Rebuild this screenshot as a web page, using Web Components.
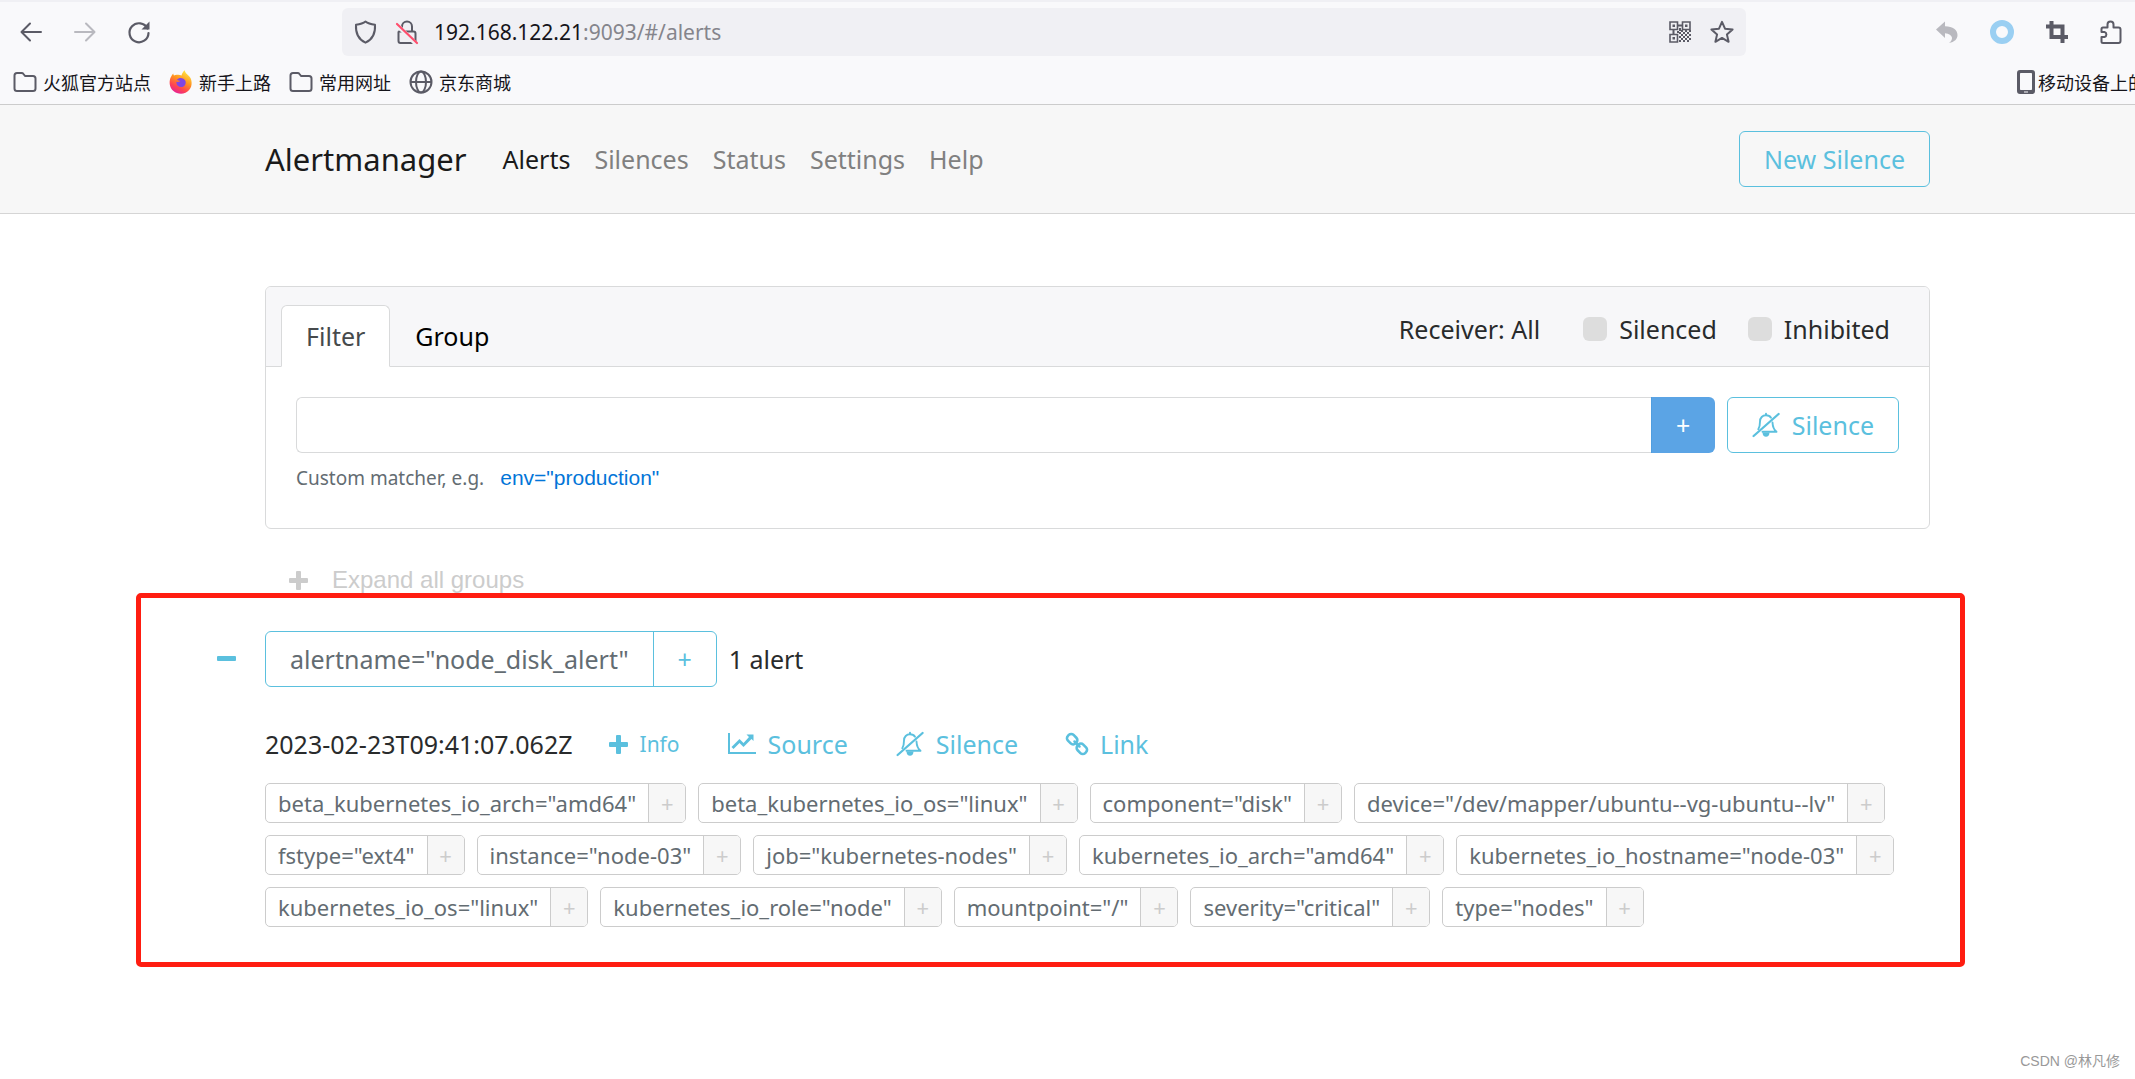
<!DOCTYPE html>
<html lang="zh-CN">
<head>
<meta charset="utf-8">
<meta name="viewport" content="width=device-width, initial-scale=1">
<title>Alertmanager</title>
<style>
  :root {
    --info: #5bc0de;
    --ink: #292b2c;
    --muted: #636c72;
    --line: #d9dadb;
    --fs-brand: 31px;
    --fs-base: 25px;
    --fs-chip: 22px;
    --fs-info: 21px;
    --fs-small: 19px;
  }
  html, body { margin: 0; background: #fff; }
  body {
    min-height: 100vh;
    overflow: hidden;
    position: relative;
    font-family: "Noto Sans", "Open Sans", "Noto Sans CJK SC", sans-serif;
    font-size: var(--fs-base);
    line-height: 28px;
    color: var(--ink);
  }
  main { padding: 72px 205px 0 265px; }
</style>
</head>
<body>
<browser-chrome></browser-chrome>
<am-navbar>
  <am-nav-link active>Alerts</am-nav-link>
  <am-nav-link>Silences</am-nav-link>
  <am-nav-link>Status</am-nav-link>
  <am-nav-link>Settings</am-nav-link>
  <am-nav-link>Help</am-nav-link>
</am-navbar>
<main>
  <am-filter-card></am-filter-card>
  <am-expand-all>Expand all groups</am-expand-all>
  <am-alert-group matcher='alertname="node_disk_alert"' count="1 alert">
    <am-alert time="2023-02-23T09:41:07.062Z">
      <am-label>beta_kubernetes_io_arch="amd64"</am-label>
      <am-label>beta_kubernetes_io_os="linux"</am-label>
      <am-label>component="disk"</am-label>
      <am-label>device="/dev/mapper/ubuntu--vg-ubuntu--lv"</am-label>
      <am-label>fstype="ext4"</am-label>
      <am-label>instance="node-03"</am-label>
      <am-label>job="kubernetes-nodes"</am-label>
      <am-label>kubernetes_io_arch="amd64"</am-label>
      <am-label>kubernetes_io_hostname="node-03"</am-label>
      <am-label>kubernetes_io_os="linux"</am-label>
      <am-label>kubernetes_io_role="node"</am-label>
      <am-label>mountpoint="/"</am-label>
      <am-label>severity="critical"</am-label>
      <am-label>type="nodes"</am-label>
    </am-alert>
  </am-alert-group>
</main>
<page-credit>CSDN @林凡修</page-credit>

<script>
const RESET = `
  :host, *, *::before, *::after { box-sizing: border-box; }
  button, input { font: inherit; margin: 0; }
  button { cursor: pointer; }
  a { text-decoration: none; color: inherit; }
`;

function define(name, markup, setup) {
  const template = document.createElement('template');
  customElements.define(name, class extends HTMLElement {
    connectedCallback() {
      if (this.shadowRoot) return;
      const root = this.attachShadow({ mode: 'open' });
      template.innerHTML = `<style>${RESET}</style>` + (typeof markup === 'function' ? markup(this) : markup);
      root.append(template.content.cloneNode(true));
      if (setup) setup(this, root);
    }
  });
}

/* Icons: each entry is [viewBox, body, width, height]. */
const LINE = 'fill="none" stroke="currentColor" stroke-linecap="round" stroke-linejoin="round"';
const ICONS = {
  back: ['0 0 24 24', `<path ${LINE} stroke-width="2" d="M22 12H3M11 3.500L2.500 12L11 20.500"/>`, 24, 24],
  forward: ['0 0 24 24', `<path ${LINE} stroke-width="2" d="M2 12H21M13 3.500L21.500 12L13 20.500"/>`, 24, 24],
  reload: ['0 0 24 24', `<path ${LINE} stroke-width="2.200" d="M20.500 8.500A9.500 9.500 0 1 0 21.500 13"/><path fill="currentColor" d="M22.500 1.500V9.500H14.500Z"/>`, 24, 24],
  shield: ['0 0 24 24', `<path ${LINE} stroke-width="2" d="M11.500 1.500C14 3.500 17.500 4.300 21 4.800C21.500 12.500 18.500 19.500 11.500 22.700C4.500 19.500 1.500 12.500 2 4.800C5.500 4.300 9 3.500 11.500 1.500Z"/>`, 24, 24],
  lockoff: ['0 0 24 24', `<path ${LINE} stroke-width="2" d="M8 11V6.500A5 5 0 0 1 18 6.500V11M5 11.500H19.500Q21.500 11.500 21.500 13.500V21Q21.500 23 19.500 23H6.500Q4.500 23 4.500 21V12"/><path stroke="#f0f0f4" stroke-width="4.500" d="M2.500 4.500L22 24"/><path stroke="#ff4f6e" stroke-width="2.200" stroke-linecap="round" d="M3 4L23 23"/>`, 24, 24],
  qr: ['0 0 22 22', `<g fill="none" stroke="currentColor" stroke-width="1.600"><path d="M1 1H8.500V8.500H1ZM13.500 1H21V8.500H13.500ZM1 13.500H8.500V21H1Z"/></g><path fill="currentColor" d="M3.500 3.500h2.500v2.500h-2.500zM16 3.500h2.500v2.500h-2.500zM3.500 16h2.500v2.500h-2.500zM9 3.500h4v2h-4zM3.500 9h2v4h-2zM10 7h2v3h-2zM8 10h2v2h-2zM12 9h2v2h-2zM16 9h2v2h-2zM20 9h2v2h-2zM10 11h2v2h-2zM14 11h2v2h-2zM18 11h2v2h-2zM12 13h2v2h-2zM16 13h2v2h-2zM20 13h2v2h-2zM10 15h2v2h-2zM14 15h2v2h-2zM18 15h2v2h-2zM12 17h2v2h-2zM16 17h2v2h-2zM20 17h2v2h-2zM10 19h2v2h-2zM14 19h2v2h-2zM18 19h2v2h-2z"/>`, 22, 22],
  star: ['0 0 24 24', `<path ${LINE} stroke-width="2" d="M12 1.800L15 8.700L22.600 9.400L16.900 14.400L18.600 21.800L12 17.900L5.400 21.800L7.100 14.400L1.400 9.400L9 8.700Z"/>`, 24, 24],
  undo: ['0 0 22 22', `<path fill="currentColor" d="M0 8.500L9 0.500V5.200C17 5.400 21.500 9 21.500 14C21.500 18 18.500 21 13 22C17.500 19 17.500 13 9 12.200V17Z"/>`, 22, 22],
  ring: ['0 0 24 24', `<circle cx="12" cy="12" r="9" fill="none" stroke="#9acff2" stroke-width="6"/>`, 24, 24],
  crop: ['0 0 22 22', `<path fill="none" stroke="currentColor" stroke-width="4" d="M5.500 0V16H22M0 5.500H16.500V22"/>`, 22, 22],
  puzzle: ['0 0 22 24', `<path ${LINE} stroke-width="2" d="M7.500 7.500V4.500A2.800 2.800 0 0 1 13.500 4.500V7.500H18.500Q20.500 7.500 20.500 9.500V21Q20.500 23 18.500 23H3Q1.500 23 1.500 21.500V17H4.500A2.600 2.600 0 0 0 4.500 12H1.500V9Q1.500 7.500 3 7.500Z"/>`, 22, 24],
  folder: ['0 0 24 22', `<path ${LINE} stroke-width="2" d="M4 2H8.500Q9.800 2 10.500 3L12 5H20Q22.500 5 22.500 7.500V17.500Q22.500 20 20 20H4Q1.500 20 1.500 17.500V4.500Q1.500 2 4 2Z"/>`, 24, 22],
  globe: ['0 0 24 24', `<g ${LINE} stroke-width="2"><circle cx="12" cy="12" r="10.500"/><ellipse cx="12" cy="12" rx="5" ry="10.500"/><path d="M2 12H22"/></g>`, 24, 24],
  firefox: ['0 0 24 24', `<defs><linearGradient id="f" x1=".8" y1="0" x2=".3" y2="1"><stop offset="0" stop-color="#fff24a"/><stop offset=".45" stop-color="#ff9320"/><stop offset=".75" stop-color="#ff4550"/><stop offset="1" stop-color="#e5209a"/></linearGradient></defs><path fill="url(#f)" d="M2.200 6.500C2.800 5 3.500 4 4.300 3.500C4.300 4.400 4.600 5 5 5.500C6 4.700 7.500 4.500 8.500 4.700C10 4.500 11.500 5 12.500 5.500C13 3.500 14 1.500 15.800 0.200C16 3.500 20 5 21.500 8C24 13.500 22.500 20 16.500 22.800C9.500 25.500 1.500 21.500 0.700 14C0.400 11 1 8.500 2.200 6.500Z"/><path fill="#8046e4" d="M8 9.500C10 7 15 7.500 16.500 11C17.500 15 14.500 17.500 11.500 17C8.500 16.500 7 14 7.500 11.500C8.500 12.500 10 11.800 11.500 11C10 10.800 9 10.500 8 9.500Z"/>`, 24, 24],
  phone: ['0 0 18 24', `<path fill="currentColor" fill-rule="evenodd" d="M3 0H15Q18 0 18 3V21Q18 24 15 24H3Q0 24 0 21V3Q0 0 3 0ZM3.800 3Q3 3 3 3.800V19.200Q3 20 3.800 20H14.200Q15 20 15 19.200V3.800Q15 3 14.200 3ZM7 21.500V22.500H11V21.500Z"/>`, 18, 24],
  plus: ['0 0 19 19', `<path fill="currentColor" d="M8 0H11Q12 0 12 1V7H18Q19 7 19 8V11Q19 12 18 12H12V18Q12 19 11 19H8Q7 19 7 18V12H1Q0 12 0 11V8Q0 7 1 7H7V1Q7 0 8 0Z"/>`, 19, 19],
  minus: ['0 0 19 19', `<rect fill="currentColor" y="6" width="19" height="5" rx="1"/>`, 19, 19],
  bell: ['0 0 28 26', `<g ${LINE}><path stroke-width="1.900" d="M6.300 17.300C7.600 15.300 8 13 8 9.500C8 5.800 10.500 3.300 14 3.300C16.200 3.300 18 4.200 19 5.700M20.500 10.500C20.700 15 22 17.800 24.500 19.800H10.500"/><path stroke-width="2" d="M14 1.700V3"/><path stroke-width="2.300" d="M1.600 24L26.600 2"/></g><path fill="currentColor" d="M10.500 20.500H17.500C17.500 23.300 16 24.800 14 24.800C12 24.800 10.500 23.300 10.500 20.500Z"/>`, 28, 26],
  chart: ['0 0 28 22', `<path fill="currentColor" d="M0 0H2V19H28V21H0ZM25.500 1.500V8L23.500 6L15.500 14L11.500 10L5.500 16L3.500 14L11.500 6L15.500 10L21 4L18.500 1.500Z"/>`, 28, 22],
  link: ['0 0 22 22', `<g transform="rotate(45 11 11)" fill="none" stroke="currentColor" stroke-width="2.600"><rect x="-1.200" y="7" width="10.700" height="8" rx="3.400"/><rect x="12.500" y="7" width="10.700" height="8" rx="3.400"/><path stroke-linecap="round" d="M7.500 11H14.500"/></g>`, 22, 22]
};

define('ui-icon', el => {
  const [box, body, w, h] = ICONS[el.getAttribute('name')];
  return `<style>:host{display:inline-flex;flex:none}svg{display:block;overflow:visible}</style>
    <svg viewBox="${box}" width="${w}" height="${h}" aria-hidden="true">${body}</svg>`;
});

define('browser-chrome', `
  <style>
    :host { display: block; background: #f9f9fb; border-top: 2px solid #f0f0f4; border-bottom: 1px solid #ccc; color: #5b5b66; }
    button { background: none; border: 0; padding: 0; color: inherit; display: flex; }
    .bar { display: flex; align-items: center; padding: 6px 13px 0 19px; height: 54px; }
    .nav { display: flex; gap: 30px; width: 323px; flex: none; align-items: center; }
    .nav .off { opacity: .4; }
    .url { flex: 0 1 1404px; height: 48px; border-radius: 6px; background: #f0f0f4; display: flex; align-items: center; padding: 0 12px; gap: 16px; }
    .addr { flex: 1; color: #85858c; font-size: 21px; white-space: nowrap; }
    .addr b { font-weight: 400; color: #15141a; }
    .in { display: flex; align-items: center; gap: 19px; }
    .tools { margin-left: auto; display: flex; align-items: center; gap: 32px; }
    .tools .off { color: #b9b9bf; }
    .marks { display: flex; align-items: center; height: 48px; padding: 4px 0 0 13px; gap: 18px; font-size: 18px; line-height: 24px; color: #15141a; overflow: hidden; }
    .marks a { display: flex; align-items: center; gap: 6px; white-space: nowrap; font-family: "Noto Sans CJK SC", sans-serif; }
    .marks ui-icon { color: #5b5b66; }
    .marks .mobile { margin: 0 -11px 0 auto; gap: 3px; }
  </style>
  <div class="bar">
    <div class="nav">
      <button aria-label="Back"><ui-icon name="back"></ui-icon></button>
      <button class="off" aria-label="Forward"><ui-icon name="forward"></ui-icon></button>
      <button aria-label="Reload"><ui-icon name="reload"></ui-icon></button>
    </div>
    <div class="url">
      <ui-icon name="shield"></ui-icon><ui-icon name="lockoff"></ui-icon>
      <span class="addr"><b>192.168.122.21</b>:9093/#/alerts</span>
      <div class="in"><ui-icon name="qr"></ui-icon><ui-icon name="star"></ui-icon></div>
    </div>
    <div class="tools">
      <ui-icon class="off" name="undo"></ui-icon>
      <ui-icon name="ring"></ui-icon>
      <ui-icon name="crop"></ui-icon>
      <ui-icon name="puzzle"></ui-icon>
    </div>
  </div>
  <nav class="marks">
    <a href="#"><ui-icon name="folder"></ui-icon>火狐官方站点</a>
    <a href="#"><ui-icon name="firefox"></ui-icon>新手上路</a>
    <a href="#"><ui-icon name="folder"></ui-icon>常用网址</a>
    <a href="#"><ui-icon name="globe"></ui-icon>京东商城</a>
    <a class="mobile" href="#"><ui-icon name="phone"></ui-icon>移动设备上的</a>
  </nav>`);

define('am-navbar', `
  <style>
    :host { display: flex; align-items: center; height: 109px; padding: 0 205px 0 265px; background: #f7f7f7; border-bottom: 1px solid #d5d5d5; }
    .brand { font-size: var(--fs-brand); line-height: 36px; color: #1a1a1a; margin-right: 36px; }
    nav { display: flex; gap: 24px; flex: 1; }
  </style>
  <a class="brand" href="#">Alertmanager</a>
  <nav><slot></slot></nav>
  <am-button>New Silence</am-button>`);

define('am-nav-link', `
  <style>
    :host { display: block; color: #808080; }
    :host([active]) { color: #1a1a1a; }
  </style>
  <a href="#"><slot></slot></a>`);

define('am-button', `
  <style>
    :host { display: block; flex: none; }
    button { display: flex; align-items: center; gap: 12px; height: 56px; padding: 0 24px; border: 1px solid var(--info); border-radius: 6px; background: none; color: var(--info); white-space: nowrap; }
    :host([plain]) button { border: 0; padding: 0; height: 42px; }
    :host([small]) { font-size: var(--fs-info); }
  </style>
  <button type="button"><slot></slot></button>`);

define('am-check', `
  <style>
    :host { display: block; }
    label { display: flex; align-items: center; gap: 12px; }
    input { appearance: none; width: 24px; height: 24px; border-radius: 6px; background: #ddd; }
  </style>
  <label><input type="checkbox"><slot></slot></label>`);

define('am-filter-card', `
  <style>
    :host { display: block; border: 1px solid var(--line); border-radius: 6px; }
    header { display: flex; align-items: flex-start; height: 80px; padding: 18px 39px 0 15px; background: #f7f7f9; border-bottom: 1px solid var(--line); border-radius: 5px 5px 0 0; }
    .tab { height: 62px; padding: 0 24px; border: 1px solid transparent; border-radius: 6px 6px 0 0; background: none; color: #000; }
    .tab.on { background: #fff; border-color: var(--line) var(--line) #fff; color: #464a4c; }
    .opts { margin-left: auto; display: flex; align-items: center; height: 48px; gap: 31px; }
    .recv { margin-right: 12px; border: 0; background: none; padding: 0; color: inherit; }
    .body { padding: 30px 30px 34px; }
    form { display: flex; gap: 12px; }
    .grp { display: flex; flex: 1; }
    .grp input { flex: 1; min-width: 0; height: 56px; padding: 0 18px; border: 1px solid var(--line); border-right: 0; border-radius: 6px 0 0 6px; outline: none; }
    .add { width: 64px; border: 0; border-left: 1px solid #4f9ee0; border-radius: 0 6px 6px 0; background: #5ba4e5; color: #fff; }
    .help { display: flex; align-items: center; gap: 16px; height: 32px; margin-top: 9px; font-size: var(--fs-small); color: var(--muted); }
    .help a { font: 21px/24px "Liberation Sans", sans-serif; color: #0275d8; }
  </style>
  <header>
    <button class="tab on" type="button">Filter</button>
    <button class="tab" type="button">Group</button>
    <div class="opts">
      <button class="recv" type="button">Receiver: All</button>
      <am-check>Silenced</am-check>
      <am-check>Inhibited</am-check>
    </div>
  </header>
  <div class="body">
    <form>
      <div class="grp">
        <input type="text" aria-label="Matcher">
        <button class="add" type="button">+</button>
      </div>
      <am-button><ui-icon name="bell"></ui-icon>Silence</am-button>
    </form>
    <div class="help"><span>Custom matcher, e.g.</span><a href="#">env="production"</a></div>
  </div>`);

define('am-expand-all', `
  <style>
    :host { display: block; margin-top: 30px; }
    button { display: flex; align-items: center; gap: 24px; height: 42px; padding: 0 24px; border: 0; background: none; color: #ccc; font: 24px/28px "Liberation Sans", sans-serif; }
  </style>
  <button type="button"><ui-icon name="plus"></ui-icon><slot></slot></button>`);

define('am-alert-group', `
  <style>
    :host { display: block; position: relative; margin-top: 30px; }
    .head { display: flex; align-items: center; margin-left: -48px; }
    .fold { border: 0; padding: 0; background: none; color: var(--info); display: flex; width: 48px; }
    .tag { display: flex; height: 56px; border: 1px solid var(--info); border-radius: 6px; }
    .name { display: flex; align-items: center; padding: 0 24px; color: var(--muted); }
    .more { width: 63px; border: 0; border-left: 1px solid var(--info); background: none; color: var(--info); }
    .count { margin-left: 12px; }
    .frame { position: absolute; inset: -38px -35px -40px -129px; border: 5px solid #ff1d11; border-radius: 5px; pointer-events: none; }
  </style>
  <div class="head">
    <button class="fold" type="button" aria-label="Collapse"><ui-icon name="minus"></ui-icon></button>
    <div class="tag"><span class="name"></span><button class="more" type="button">+</button></div>
    <span class="count"></span>
  </div>
  <slot></slot>
  <div class="frame"></div>`, (el, root) => {
    root.querySelector('.name').textContent = el.getAttribute('matcher');
    root.querySelector('.count').textContent = el.getAttribute('count');
  });

define('am-alert', `
  <style>
    :host { display: block; margin-top: 36px; }
    .row { display: flex; align-items: center; height: 42px; }
    time { margin-right: 36px; }
    .acts { display: flex; gap: 48px; }
    .labels { display: flex; flex-wrap: wrap; gap: 12px; margin-top: 18px; }
  </style>
  <div class="row">
    <time></time>
    <div class="acts">
      <am-button plain small><ui-icon name="plus"></ui-icon>Info</am-button>
      <am-button plain><ui-icon name="chart"></ui-icon>Source</am-button>
      <am-button plain><ui-icon name="bell"></ui-icon>Silence</am-button>
      <am-button plain><ui-icon name="link"></ui-icon>Link</am-button>
    </div>
  </div>
  <div class="labels"><slot></slot></div>`, (el, root) => {
    root.querySelector('time').textContent = el.getAttribute('time');
  });

define('am-label', `
  <style>
    :host { display: flex; height: 40px; border: 1px solid #ccc; border-radius: 5px; overflow: hidden; font-size: var(--fs-chip); color: var(--muted); white-space: nowrap; }
    span { display: flex; align-items: center; padding: 0 12px; }
    button { width: 37px; padding: 0; border: 0; border-left: 1px solid #ccc; background: #f7f7f7; color: #ccc; }
  </style>
  <span><slot></slot></span><button type="button">+</button>`);

define('page-credit', `
  <style>
    :host { position: absolute; right: 15px; bottom: 7px; font: 14px/22px "Liberation Sans", "Noto Sans CJK SC", sans-serif; color: #999; }
  </style>
  <slot></slot>`);
</script>
</body>
</html>
